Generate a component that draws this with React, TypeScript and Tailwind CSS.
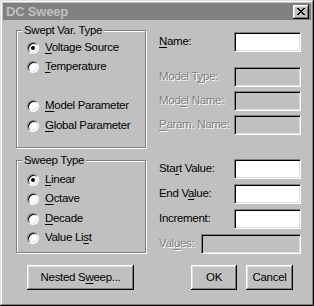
import React from "react";

const raised =
  "shadow-[inset_-1px_-1px_0_#000,inset_1px_1px_0_#fff,inset_-2px_-2px_0_#808080,inset_2px_2px_0_#dfdfdf]";
const sunken =
  "border border-t-[#808080] border-l-[#808080] border-b-white border-r-white shadow-[inset_1px_1px_0_#000,inset_-1px_-1px_0_#dfdfdf]";
const dim = "text-[#808080] [text-shadow:1px_1px_0_#fff]";

function Key({ children }: { children: React.ReactNode }) {
  return <u className="underline underline-offset-[2px] decoration-1">{children}</u>;
}

function Radio({ checked, children, className = "" }: { checked?: boolean; children: React.ReactNode; className?: string }) {
  return (
    <div className={`flex h-[19px] items-center gap-[6px] ${className}`}>
      <div className="flex h-[12px] w-[12px] items-center justify-center rounded-full bg-white border border-t-[#808080] border-l-[#808080] border-b-white border-r-white shadow-[inset_1px_1px_0_#000,inset_-1px_-1px_0_#dfdfdf]">
        {checked && <div className="h-[4px] w-[4px] rounded-full bg-black" />}
      </div>
      <span>{children}</span>
    </div>
  );
}

function Group({ label, className = "", children }: { label: string; className?: string; children: React.ReactNode }) {
  return (
    <div
      className={`relative w-[130px] border border-[#808080] shadow-[inset_1px_1px_0_#fff,1px_1px_0_#fff] pl-[10px] ${className}`}
    >
      <span className="absolute -top-[8px] left-[5px] bg-[#c0c0c0] px-[2px] leading-[14px]">{label}</span>
      {children}
    </div>
  );
}

function Field({
  label,
  disabled,
  className = "",
  wide,
}: {
  label: React.ReactNode;
  disabled?: boolean;
  className?: string;
  wide?: boolean;
}) {
  return (
    <div className={`flex h-[20px] items-center justify-between ${className}`}>
      <span className={disabled ? dim : ""}>{label}</span>
      <div
        className={`h-[20px] ${wide ? "w-[100px]" : "w-[67px]"} ${disabled ? "bg-[#c0c0c0]" : "bg-white"} ${sunken}`}
      />
    </div>
  );
}

function Button({ children, className = "" }: { children: React.ReactNode; className?: string }) {
  return (
    <div className={`flex h-[25px] items-center justify-center bg-[#c0c0c0] ${raised} ${className}`}>
      {children}
    </div>
  );
}

export default function App() {
  return (
    <div className="flex h-[306px] w-[314px] flex-col bg-[#c0c0c0] p-[3px] font-['Liberation_Sans',Arial,sans-serif] text-[11.5px] tracking-[-0.3px] text-black shadow-[inset_-1px_-1px_0_#000,inset_1px_1px_0_#dfdfdf,inset_-2px_-2px_0_#808080,inset_2px_2px_0_#fff]">
      {/* title bar */}
      <div className="flex h-[17px] items-center justify-between bg-[#808080] pl-[3px] pr-[2px]">
        <span className="text-[13px] font-bold tracking-[-0.2px] text-[#c0c0c0]">DC Sweep</span>
        <div className={`flex h-[14px] w-[16px] items-center justify-center bg-[#c0c0c0] ${raised}`}>
          <svg width="8" height="7" viewBox="0 0 8 7" shapeRendering="crispEdges">
            <path
              d="M0 0h2v1H0zM6 0h2v1H6zM1 1h2v1H1zM5 1h2v1H5zM2 2h4v1H2zM3 3h2v1H3zM2 4h4v1H2zM1 5h2v1H1zM5 5h2v1H5zM0 6h2v1H0zM6 6h2v1H6z"
              fill="#000"
            />
          </svg>
        </div>
      </div>

      <div className="flex">
        {/* left column */}
        <div className="ml-[13px] flex flex-col">
          <Group label="Swept Var. Type" className="mt-[10px] h-[118px] pt-[7px]">
            <Radio checked>
              <Key>V</Key>oltage Source
            </Radio>
            <Radio>
              <Key>T</Key>emperature
            </Radio>
            <Radio className="mt-[20px]">
              <Key>M</Key>odel Parameter
            </Radio>
            <Radio className="mt-[1px]">
              <Key>G</Key>lobal Parameter
            </Radio>
          </Group>
          <Group label="Sweep Type" className="mt-[12px] h-[93px] pt-[9px]">
            <Radio checked>
              <Key>L</Key>inear
            </Radio>
            <Radio>
              <Key>O</Key>ctave
            </Radio>
            <Radio className="mt-[1px]">
              <Key>D</Key>ecade
            </Radio>
            <Radio>
              Value Li<Key>s</Key>t
            </Radio>
          </Group>
        </div>

        {/* right column */}
        <div className="ml-[13px] flex w-[142px] flex-col">
          <Field
            className="mt-[12px]"
            label={
              <>
                <Key>N</Key>ame:
              </>
            }
          />
          <Field
            className="mt-[15px]"
            disabled
            label={
              <>
                Model T<Key>y</Key>pe:
              </>
            }
          />
          <Field
            className="mt-[4px]"
            disabled
            label={
              <>
                Mod<Key>e</Key>l Name:
              </>
            }
          />
          <Field
            className="mt-[4px]"
            disabled
            label={
              <>
                <Key>P</Key>aram. Name:
              </>
            }
          />
          <Field
            className="mt-[24px]"
            label={
              <>
                Sta<Key>r</Key>t Value:
              </>
            }
          />
          <Field
            className="mt-[5px]"
            label={
              <>
                End V<Key>a</Key>lue:
              </>
            }
          />
          <Field className="mt-[5px]" label="Increment:" />
          <Field
            className="mt-[5px]"
            disabled
            wide
            label={
              <>
                Val<Key>u</Key>es:
              </>
            }
          />
        </div>
      </div>

      {/* buttons */}
      <div className="mt-[11px] flex">
        <Button className="ml-[24px] w-[107px]">
          Nested S<Key>w</Key>eep...
        </Button>
        <Button className="ml-[57px] w-[46px]">OK</Button>
        <Button className="ml-[9px] w-[47px]">Cancel</Button>
      </div>
    </div>
  );
}
